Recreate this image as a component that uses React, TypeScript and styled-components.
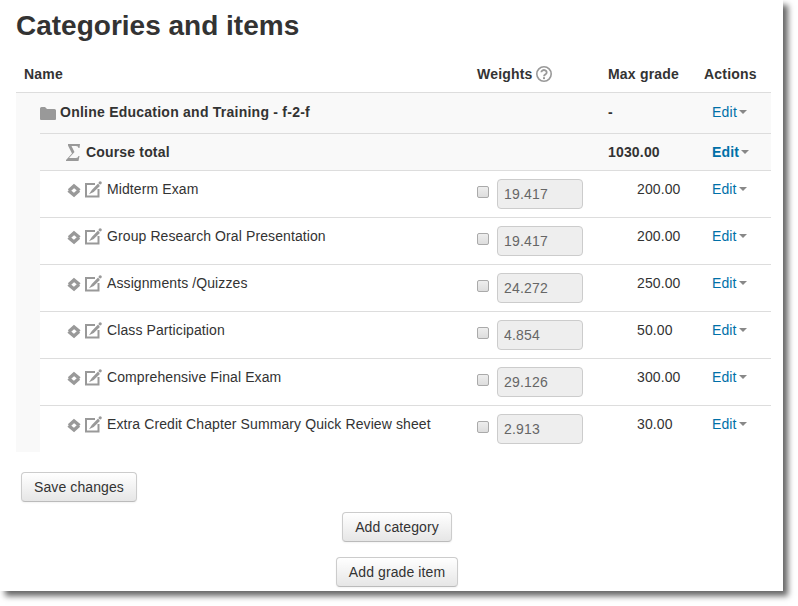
import React from "react";
import styled, { createGlobalStyle } from "styled-components";

const GlobalStyle = createGlobalStyle`
  html, body {
    margin: 0;
    padding: 0;
    background: #fff;
  }
  body {
    font-family: "Liberation Sans", Arial, sans-serif;
    font-size: 14px;
    line-height: 20px;
    letter-spacing: 0.1px;
    color: #333;
  }
`;

const Page = styled.div`
  width: 798px;
  height: 606px;
  overflow: hidden;
`;

const Screenshot = styled.div`
  width: 783px;
  height: 591px;
  box-sizing: border-box;
  padding: 8px 12px 0 16px;
  background: #fff;
  box-shadow: 5px 5px 6px rgba(0, 0, 0, 0.6);
`;

const Title = styled.h2`
  margin: 0 0 8px;
  font-size: 28px;
  line-height: 36px;
  font-weight: bold;
  letter-spacing: 0;
  color: #333;
`;

const columns = "1fr 131px 96px 67px";

const HeadRow = styled.div`
  display: grid;
  grid-template-columns: ${columns};
  height: 40px;
  box-sizing: border-box;
  padding: 4px 0 0 8px;
  align-items: center;
  font-weight: bold;
  letter-spacing: 0.2px;
`;

const WeightsHead = styled.span`
  display: flex;
  align-items: center;
  gap: 3px;
`;

const CategoryRow = styled.div`
  display: grid;
  grid-template-columns: ${columns};
  height: 40px;
  box-sizing: border-box;
  padding: 0 0 2px 24px;
  align-items: center;
  border-top: 1px solid #ddd;
  background: #f9f9f9;
  font-weight: bold;
  letter-spacing: 0.24px;
`;

const Nested = styled.div`
  padding: 1px 0 0 24px;
  background: #f9f9f9;
`;

const TotalRow = styled.div`
  display: grid;
  grid-template-columns: ${columns};
  height: 36px;
  align-items: center;
  border-top: 1px solid #ddd;
  font-weight: bold;
  letter-spacing: 0.17px;
`;

const ItemRow = styled.div`
  display: grid;
  grid-template-columns: ${columns};
  height: 46px;
  border-top: 1px solid #ddd;
  background: #fff;
`;

const NameCell = styled.div<{ $indent: number; $gap: number }>`
  display: flex;
  align-items: center;
  padding-left: ${(p) => p.$indent}px;
  gap: ${(p) => p.$gap}px;
`;

const ItemName = styled.div`
  display: flex;
  padding: 8px 0 0 27px;
  height: 20px;
`;

const ItemIcons = styled.span`
  display: flex;
  align-items: flex-start;
  width: 40px;
  margin-top: 2px;
  gap: 4px;
`;

const WeightCell = styled.div`
  display: flex;
  align-items: flex-start;
  padding-top: 8px;
  gap: 8px;
`;

const Check = styled.input.attrs({ type: "checkbox" })`
  width: 12px;
  height: 12px;
  margin: 7px 0 0;
  appearance: none;
  box-sizing: border-box;
  border: 1px solid #aaa;
  border-radius: 2px;
  background: linear-gradient(#eee, #ddd);
`;

const WeightInput = styled.input.attrs({ type: "text", disabled: true })`
  width: 86px;
  height: 30px;
  box-sizing: border-box;
  padding: 2px 6px;
  border: 1px solid #ccc;
  border-radius: 4px;
  background: #eee;
  font: 14px "Liberation Sans", Arial, sans-serif;
  letter-spacing: 0.2px;
  color: #666;
`;

const GradeCell = styled.div`
  padding: 8px 0 0 29px;
`;

const ActionCell = styled.div<{ $top?: number }>`
  padding: ${(p) => p.$top ?? 0}px 0 0 8px;
  font-weight: normal;
`;

const EditLink = styled.a<{ $strong?: boolean }>`
  display: inline-flex;
  align-items: center;
  gap: 2px;
  color: #0070a8;
  font-weight: ${(p) => (p.$strong ? "bold" : "normal")};
  text-decoration: none;
`;

const Caret = styled.span`
  width: 0;
  height: 0;
  border-style: solid;
  border-width: 4px 4px 0;
  border-color: #888 transparent transparent;
`;

const Footer = styled.div`
  display: flex;
  flex-direction: column;
  align-items: center;
  padding-top: 20px;
  margin-right: -7px;
`;

const Button = styled.button`
  height: 30px;
  padding: 0 12px;
  box-sizing: border-box;
  border: 1px solid #ccc;
  border-bottom-color: #bbb;
  border-radius: 4px;
  background: linear-gradient(#fff, #e6e6e6);
  box-shadow: 0 1px 2px rgba(0, 0, 0, 0.05);
  font: 14px "Liberation Sans", Arial, sans-serif;
  letter-spacing: 0.1px;
  color: #333;
`;

const SaveButton = styled(Button)`
  align-self: flex-start;
  margin: 0 0 10px 5px;
`;

const AddButton = styled(Button)`
  margin-bottom: 15px;
`;

const MoveGlyph = styled.svg`
  margin-top: 2px;
`;

const HelpIcon = () => (
  <svg width="16" height="16" viewBox="0 0 16 16" fill="none">
    <circle cx="8" cy="8" r="7.2" stroke="#999" strokeWidth="1.6" />
    <path d="M5.3 6.3a2.700 2.300 0 1 1 4.300 1.900c-1 .7-1.600 1.100-1.600 2.100" stroke="#999" strokeWidth="1.8" />
    <rect x="7" y="11.200" width="2" height="1.900" fill="#999" />
  </svg>
);

const FolderIcon = () => (
  <svg width="16" height="16" viewBox="0 0 16 16">
    <path d="M0 4.500Q0 3 1.500 3H5l2 2h7.500Q16 5 16 6.500V15q0 1-1 1H1q-1 0-1-1z" fill="#999" />
  </svg>
);

const SigmaIcon = () => (
  <svg width="14" height="17" viewBox="0 0 14 17">
    <path d="M2 0H14L13.500 4H12.500Q12.300 2 10 2H5.500L8.500 8 3 14H10Q12 14 12.500 12H13.500L12.500 17H0V16L6 9.500 2 1.500z" fill="#999" />
  </svg>
);

const MoveIcon = () => (
  <MoveGlyph width="14" height="15" viewBox="0 0 14 15">
    <path d="M2 7.500 7 3 12.500 7.500" fill="none" stroke="#999" strokeWidth="3.400" />
    <path d="M1.500 7.500 7 12 12 7.500" fill="none" stroke="#999" strokeWidth="3.400" />
  </MoveGlyph>
);

const EditIcon = () => (
  <svg width="17" height="17" viewBox="0 0 17 17">
    <path d="M10 3H1v12.500h12.500V8" fill="none" stroke="#999" strokeWidth="2" />
    <path d="M13 4 7.500 9.500 6.500 11l1.700-.8L13.700 5z" fill="#999" stroke="#999" strokeWidth="1.800" />
    <circle cx="15.200" cy="1.800" r="1.600" fill="#999" />
  </svg>
);

const items = [
  { name: "Midterm Exam", weight: "19.417", max: "200.00" },
  { name: "Group Research Oral Presentation", weight: "19.417", max: "200.00" },
  { name: "Assignments /Quizzes", weight: "24.272", max: "250.00" },
  { name: "Class Participation", weight: "4.854", max: "50.00" },
  { name: "Comprehensive Final Exam", weight: "29.126", max: "300.00" },
  { name: "Extra Credit Chapter Summary Quick Review sheet", weight: "2.913", max: "30.00" },
];

export default function App(): JSX.Element {
  return (
    <Page>
      <GlobalStyle />
      <Screenshot>
        <Title>Categories and items</Title>
        <HeadRow>
          <span>Name</span>
          <WeightsHead>
            Weights <HelpIcon />
          </WeightsHead>
          <span>Max grade</span>
          <span>Actions</span>
        </HeadRow>
        <CategoryRow>
          <NameCell $indent={0} $gap={4}>
            <FolderIcon />
            Online Education and Training - f-2-f
          </NameCell>
          <span />
          <span>-</span>
          <ActionCell>
            <EditLink>
              Edit
              <Caret />
            </EditLink>
          </ActionCell>
        </CategoryRow>
        <Nested>
          <TotalRow>
            <NameCell $indent={26} $gap={6}>
              <SigmaIcon />
              Course total
            </NameCell>
            <span />
            <span>1030.00</span>
            <ActionCell>
              <EditLink $strong>
                Edit
                <Caret />
              </EditLink>
            </ActionCell>
          </TotalRow>
          {items.map((item) => (
            <ItemRow key={item.name}>
              <ItemName>
                <ItemIcons>
                  <MoveIcon />
                  <EditIcon />
                </ItemIcons>
                {item.name}
              </ItemName>
              <WeightCell>
                <Check />
                <WeightInput defaultValue={item.weight} />
              </WeightCell>
              <GradeCell>{item.max}</GradeCell>
              <ActionCell $top={8}>
                <EditLink>
                  Edit
                  <Caret />
                </EditLink>
              </ActionCell>
            </ItemRow>
          ))}
        </Nested>
        <Footer>
          <SaveButton>Save changes</SaveButton>
          <AddButton>Add category</AddButton>
          <AddButton>Add grade item</AddButton>
        </Footer>
      </Screenshot>
    </Page>
  );
}
